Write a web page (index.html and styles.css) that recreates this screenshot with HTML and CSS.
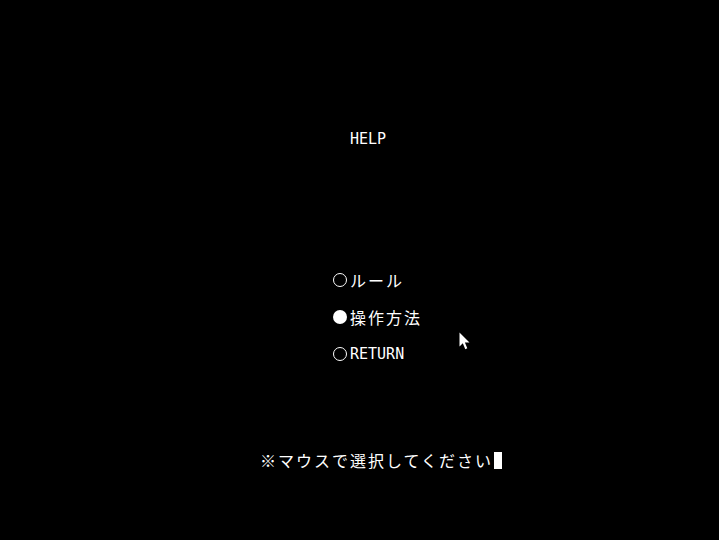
FILE: index.html
```html
<!DOCTYPE html>
<html lang="ja">
<head>
<meta charset="utf-8">
<title>HELP</title>
<link rel="stylesheet" href="styles.css">
</head>
<body>
<div class="screen">
  <div class="title"><span class="lat">HELP</span></div>
  <ul class="menu">
    <li class="item"><span class="mark"><span class="ring"></span></span><span class="jp">ルール</span></li>
    <li class="item"><span class="mark"><span class="dot"></span></span><span class="jp">操作方法</span></li>
    <li class="item"><span class="mark"><span class="ring"></span></span><span class="lat">RETURN</span></li>
  </ul>
  <div class="prompt"><span class="jp">※マウスで選択してください</span><span class="caret"></span></div>
  <svg class="pointer" width="13" height="19" viewBox="0 0 13 19"><path d="M0.5 0.5 L0.5 14.5 L3.8 11.3 L6.3 17.2 L8.3 16.3 L5.9 10.6 L10.5 10.6 Z" fill="#fff"/></svg>
</div>
</body>
</html>
```
FILE: styles.css
```css
html, body {
  margin: 0;
  padding: 0;
  background: #000;
}
.screen {
  position: relative;
  width: 719px;
  height: 540px;
  display: flex;
  flex-direction: column;
  padding-top: 130px;
  box-sizing: border-box;
  color: #fff;
  font-family: "DejaVu Sans Mono", monospace;
  font-size: 15px;
  line-height: 18px;
}
.lat {
  font-family: "DejaVu Sans Mono", monospace;
  font-size: 15px;
}
.jp {
  font-family: "Noto Sans CJK JP", sans-serif;
  font-size: 16px;
  letter-spacing: 2px;
}
.title {
  height: 18px;
  margin-left: 350px;
}
.menu {
  list-style: none;
  margin: 123px 0 0 333px;
  padding: 0;
  display: flex;
  flex-direction: column;
  gap: 19px;
}
.item {
  height: 18px;
  display: flex;
  align-items: center;
}
.mark {
  width: 17px;
  height: 18px;
  display: flex;
  align-items: center;
}
.ring {
  width: 14px;
  height: 14px;
  box-sizing: border-box;
  border: 1.6px solid #fff;
  border-radius: 50%;
}
.dot {
  width: 14px;
  height: 14px;
  border-radius: 50%;
  background: #fff;
}
.prompt {
  margin: 88px 0 0 260px;
  height: 18px;
  display: flex;
  align-items: center;
}
.caret {
  display: inline-block;
  width: 8px;
  height: 17px;
  margin-left: 1px;
  background: #fff;
}
.pointer {
  position: absolute;
  left: 459px;
  top: 332px;
}
```
